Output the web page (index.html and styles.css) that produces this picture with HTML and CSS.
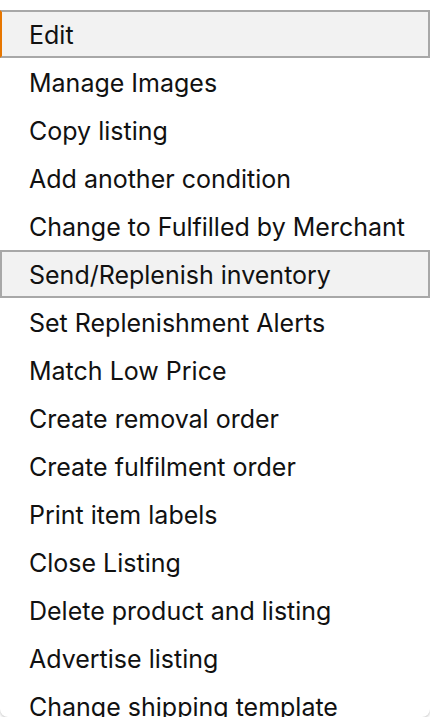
FILE: index.html
```
<!DOCTYPE html>
<html lang="en">
<head>
<meta charset="utf-8">
<title>Listing actions</title>
<link rel="stylesheet" href="styles.css">
</head>
<body>
<div class="menu">
  <ul class="menu-list">
    <li class="menu-item is-selected">Edit</li>
    <li class="menu-item">Manage Images</li>
    <li class="menu-item">Copy listing</li>
    <li class="menu-item">Add another condition</li>
    <li class="menu-item">Change to Fulfilled by Merchant</li>
    <li class="menu-item is-hover">Send/Replenish inventory</li>
    <li class="menu-item">Set Replenishment Alerts</li>
    <li class="menu-item">Match Low Price</li>
    <li class="menu-item">Create removal order</li>
    <li class="menu-item">Create fulfilment order</li>
    <li class="menu-item">Print item labels</li>
    <li class="menu-item">Close Listing</li>
    <li class="menu-item">Delete product and listing</li>
    <li class="menu-item">Advertise listing</li>
    <li class="menu-item">Change shipping template</li>
  </ul>
</div>
</body>
</html>
```
FILE: styles.css
```
html, body {
  margin: 0;
  padding: 0;
  background: #ffffff;
}
body {
  font-family: Inter, "Noto Sans", sans-serif;
  color: #111111;
}
.menu {
  height: 717px;
  overflow: hidden;
  background: #ffffff;
  border-radius: 0 0 8px 8px;
  box-shadow: 0 1px 3px rgba(0, 0, 0, 0.25);
  box-sizing: border-box;
  padding-top: 10px;
}
.menu-list {
  list-style: none;
  margin: 0;
  padding: 0;
  display: flex;
  flex-direction: column;
}
.menu-item {
  box-sizing: border-box;
  height: 48px;
  display: flex;
  align-items: center;
  padding-left: 27px;
  padding-top: 2px;
  font-size: 25px;
  line-height: 1;
  white-space: nowrap;
  border: 2px solid transparent;
}
.menu-item.is-selected,
.menu-item.is-hover {
  background: #f2f2f2;
  border-color: #a8a8a8;
}
.menu-item.is-selected {
  border-left-color: #e77600;
}
```
